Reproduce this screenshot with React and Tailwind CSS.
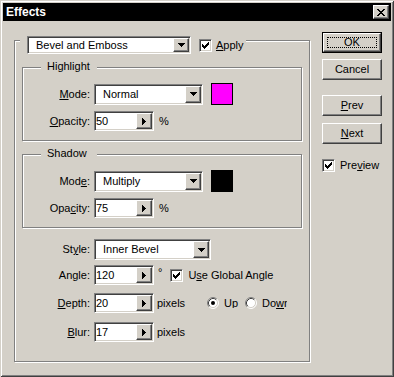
import React from "react";

const sunken =
  "border border-t-[#808080] border-l-[#808080] border-r-white border-b-white shadow-[inset_1px_1px_0_#404040,inset_-1px_-1px_0_#d4d0c8] p-px";
const raised =
  "border border-t-white border-l-white border-r-[#404040] border-b-[#404040] shadow-[inset_-1px_-1px_0_#808080]";
const etched =
  "border border-[#808080] shadow-[1px_1px_0_#fff,inset_1px_1px_0_#fff]";

function U({ children }) {
  return <span className="underline underline-offset-[1px]">{children}</span>;
}

function DownTri() {
  return (
    <svg width="7" height="4" viewBox="0 0 7 4" shapeRendering="crispEdges">
      <path d="M0 0h7v1H0z M1 1h5v1H1z M2 2h3v1H2z M3 3h1v1H3z" fill="#000" />
    </svg>
  );
}

function RightTri() {
  return (
    <svg width="4" height="7" viewBox="0 0 4 7" shapeRendering="crispEdges">
      <path d="M0 0h1v7H0z M1 1h1v5H1z M2 2h1v3H2z M3 3h1v1H3z" fill="#000" />
    </svg>
  );
}

function Select({ value, cls }) {
  return (
    <div className={`flex bg-white ${sunken} ${cls}`}>
      <div className="flex flex-1 items-center overflow-hidden whitespace-nowrap pl-[7px]">
        {value}
      </div>
      <div className={`flex w-[16px] items-center justify-center bg-[#d4d0c8] ${raised}`}>
        <DownTri />
      </div>
    </div>
  );
}

function Spin({ value, cls = "" }) {
  return (
    <div className={`flex h-[20px] w-[60px] bg-white ${sunken} ${cls}`}>
      <div className="flex flex-1 items-center">{value}</div>
      <div className={`flex w-[16px] items-center justify-center bg-[#d4d0c8] ${raised}`}>
        <RightTri />
      </div>
    </div>
  );
}

function Check({ cls = "" }) {
  return (
    <div
      className={`flex h-[13px] w-[13px] shrink-0 items-center justify-center bg-white border border-t-[#808080] border-l-[#808080] border-r-white border-b-white shadow-[inset_1px_1px_0_#404040,inset_-1px_-1px_0_#d4d0c8] ${cls}`}
    >
      <svg width="7" height="7" viewBox="0 0 7 7" shapeRendering="crispEdges">
        <path
          d="M6 0h1v1H6z M5 1h2v1H5z M0 2h1v1H0z M4 2h3v1H4z M0 3h2v1H0z M3 3h3v1H3z M0 4h5v1H0z M1 5h3v1H1z M2 6h1v1H2z"
          fill="#000"
        />
      </svg>
    </div>
  );
}

function Radio({ checked, cls = "" }) {
  return (
    <svg width="12" height="12" viewBox="0 0 12 12" className={`shrink-0 ${cls}`}>
      <circle cx="6" cy="6" r="5" fill="#fff" />
      <path d="M2.11 9.89 A5.5 5.5 0 0 1 9.89 2.11" stroke="#808080" fill="none" />
      <path d="M9.89 2.11 A5.5 5.5 0 0 1 2.11 9.89" stroke="#fff" fill="none" />
      <path d="M2.82 9.18 A4.5 4.5 0 0 1 9.18 2.82" stroke="#404040" fill="none" />
      <path d="M9.18 2.82 A4.5 4.5 0 0 1 2.82 9.18" stroke="#d4d0c8" fill="none" />
      {checked && <circle cx="6" cy="6" r="2" fill="#000" />}
    </svg>
  );
}

function Legend({ children }) {
  return (
    <div className="absolute left-[18px] top-[-8px] h-[13px] w-[56px] bg-[#d4d0c8] pl-[6px]">
      {children}
    </div>
  );
}

function Button({ children, cls = "" }) {
  return (
    <div
      className={`flex h-[21px] w-[60px] items-center justify-center bg-[#d4d0c8] ${raised} ${cls}`}
    >
      {children}
    </div>
  );
}

export default function App() {
  return (
    <div className="h-[377px] w-[394px] bg-[#d4d0c8] p-[3px] font-['Liberation_Sans',Arial,sans-serif] text-[11px] leading-[13px] text-black shadow-[inset_1px_1px_0_#d4d0c8,inset_-1px_-1px_0_#404040,inset_2px_2px_0_#fff,inset_-2px_-2px_0_#808080]">
      {/* title bar */}
      <div className="flex h-[18px] items-center justify-between bg-black pl-[3px] pr-[2px]">
        <span className="text-[12px] font-bold leading-[14px] text-white">Effects</span>
        <div className={`flex h-[14px] w-[16px] items-center justify-center bg-[#d4d0c8] ${raised}`}>
          <svg width="8" height="7" viewBox="0 0 8 7" shapeRendering="crispEdges">
            <path
              d="M0 0h2v1H0z M6 0h2v1H6z M1 1h2v1H1z M5 1h2v1H5z M2 2h4v1H2z M3 3h2v1H3z M2 4h4v1H2z M1 5h2v1H1z M5 5h2v1H5z M0 6h2v1H0z M6 6h2v1H6z"
              fill="#000"
            />
          </svg>
        </div>
      </div>

      {/* body */}
      <div className="flex items-start pl-[11px]">
        {/* outer group */}
        <div className={`relative mt-[19px] h-[322px] w-[296px] ${etched}`}>
          <div className="absolute left-[5px] top-[-5px] flex items-center bg-[#d4d0c8] pl-[7px] pr-[2px]">
            <Select value="Bevel and Emboss" cls="h-[18px] w-[164px]" />
            <Check cls="ml-[8px]" />
            <span className="ml-[4px]">
              <U>A</U>pply
            </span>
          </div>

          <div className="flex flex-col pl-[7px] pt-[26px]">
            {/* Highlight */}
            <div className={`relative h-[74px] w-[280px] ${etched}`}>
              <Legend>Highlight</Legend>
              <div className="flex flex-col pt-[15px]">
                <div className="flex items-center">
                  <div className="w-[67px] text-right">
                    <U>M</U>ode:
                  </div>
                  <Select value="Normal" cls="ml-[4px] h-[21px] w-[109px]" />
                  <div className="ml-[8px] h-[22px] w-[22px] border border-black bg-[#ff00ff]" />
                </div>
                <div className="mt-[6px] flex items-center">
                  <div className="w-[67px] text-right">
                    <U>O</U>pacity:
                  </div>
                  <Spin value="50" cls="ml-[4px]" />
                  <span className="ml-[5px]">%</span>
                </div>
              </div>
            </div>

            {/* Shadow */}
            <div className={`relative mt-[13px] h-[74px] w-[280px] ${etched}`}>
              <Legend>Shadow</Legend>
              <div className="flex flex-col pt-[15px]">
                <div className="flex items-center">
                  <div className="w-[67px] text-right">
                    Mod<U>e</U>:
                  </div>
                  <Select value="Multiply" cls="ml-[4px] h-[21px] w-[109px]" />
                  <div className="ml-[8px] h-[22px] w-[22px] border border-black bg-black" />
                </div>
                <div className="mt-[6px] flex items-center">
                  <div className="w-[67px] text-right">
                    Opa<U>c</U>ity:
                  </div>
                  <Spin value="75" cls="ml-[4px]" />
                  <span className="ml-[5px]">%</span>
                </div>
              </div>
            </div>

            {/* bottom rows */}
            <div className="mt-[11px] flex items-center">
              <div className="w-[68px] text-right">
                St<U>y</U>le:
              </div>
              <Select value="Inner Bevel" cls="ml-[4px] h-[21px] w-[117px]" />
            </div>
            <div className="mt-[5px] flex items-center">
              <div className="w-[68px] text-right">Angle:</div>
              <Spin value="120" cls="ml-[4px]" />
              <span className="ml-[4px] self-start pt-[1px]">°</span>
              <Check cls="ml-[8px]" />
              <span className="ml-[5px]">
                U<U>s</U>e Global Angle
              </span>
            </div>
            <div className="mt-[8px] flex items-center">
              <div className="w-[68px] text-right">
                <U>D</U>epth:
              </div>
              <Spin value="20" cls="ml-[4px]" />
              <div className="w-[53px] pl-[3px]">pixels</div>
              <Radio checked />
              <div className="ml-[5px] h-[11px] w-[16px] self-start overflow-hidden whitespace-nowrap pt-0 mt-[4px]">
                <U>U</U>p
              </div>
              <Radio cls="ml-[5px]" />
              <div className="ml-[5px] w-[25px] overflow-hidden whitespace-nowrap">
                Do<U>w</U>n
              </div>
            </div>
            <div className="mt-[9px] flex items-center">
              <div className="w-[68px] text-right">
                <U>B</U>lur:
              </div>
              <Spin value="17" cls="ml-[4px]" />
              <div className="pl-[3px]">pixels</div>
            </div>
          </div>
        </div>

        {/* right column */}
        <div className="ml-[12px] mt-[11px] flex flex-col">
          <div className="h-[21px] w-[60px] border border-black">
            <div
              className={`relative flex h-full w-full items-center justify-center bg-[#d4d0c8] ${raised}`}
            >
              <div className="absolute inset-[3px] border border-dotted border-black" />
              OK
            </div>
          </div>
          <Button cls="mt-[6px]">Cancel</Button>
          <Button cls="mt-[15px]">
            <span>
              <U>P</U>rev
            </span>
          </Button>
          <Button cls="mt-[7px]">
            <span>
              <U>N</U>ext
            </span>
          </Button>
          <div className="mt-[15px] flex items-center">
            <Check />
            <span className="ml-[5px]">
              Pre<U>v</U>iew
            </span>
          </div>
        </div>
      </div>
    </div>
  );
}
